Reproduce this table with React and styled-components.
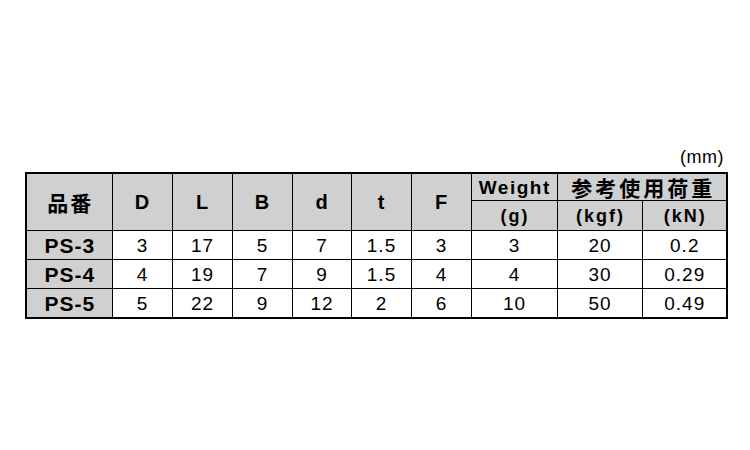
import React from 'react';
import styled, { createGlobalStyle } from 'styled-components';

const GlobalStyle = createGlobalStyle`
  html, body { margin: 0; padding: 0; background: #fff; }
  body { font-family: "Liberation Sans", "Noto Sans CJK JP", sans-serif; color: #000; }
`;

const Page = styled.div`
  width: 750px; height: 450px; box-sizing: border-box;
  padding: 146px 0 0 25px;
  display: flex; flex-direction: column;
`;
const Unit = styled.div`
  width: 701px; text-align: right; font-size: 18px; height: 26px; line-height: 22px;
  padding-right: 2px; box-sizing: border-box; letter-spacing: 0.5px;
`;
const Table = styled.table`
  border-collapse: collapse; table-layout: fixed; width: 701px;
  border: 2px solid #000;
`;
const Th = styled.th`
  background: #d0d0d0; border: 1px solid #000; padding: 0;
  font-weight: bold; text-align: center; white-space: nowrap; line-height: 1;
  font-size: ${({ $size }) => $size || 20}px;
  letter-spacing: ${({ $ls }) => $ls || 0}px;
  height: ${({ $h }) => $h || 26}px;
  font-family: ${({ $jp }) => ($jp ? '"Noto Sans CJK JP", sans-serif' : '"Liberation Sans", sans-serif')};
  padding-left: ${({ $ls }) => $ls || 0}px;
`;
const Name = styled.td`
  background: #d0d0d0; border: 1px solid #000; padding: 0 0 0 1px; line-height: 1;
  font-weight: bold; font-size: 21px; letter-spacing: 1px; text-align: center; height: 28px;
`;
const Td = styled.td`
  border: 1px solid #000; padding: 0 0 0 1px; text-align: center; line-height: 1;
  font-size: 19px; letter-spacing: 1px; height: 28px;
`;

const widths = [86, 60, 60, 60, 59, 60, 60, 86, 85, 85];
const rows = [
  ['PS-3', '3', '17', '5', '7', '1.5', '3', '3', '20', '0.2'],
  ['PS-4', '4', '19', '7', '9', '1.5', '4', '4', '30', '0.29'],
  ['PS-5', '5', '22', '9', '12', '2', '6', '10', '50', '0.49'],
];

export default function App() {
  return (
    <Page>
      <GlobalStyle />
      <Unit>(mm)</Unit>
      <Table>
        <colgroup>
          {widths.map((w, i) => <col key={i} style={{ width: w }} />)}
        </colgroup>
        <thead>
          <tr>
            <Th rowSpan={2} $jp $size={21} $ls={2}>品番</Th>
            <Th rowSpan={2}>D</Th>
            <Th rowSpan={2}>L</Th>
            <Th rowSpan={2}>B</Th>
            <Th rowSpan={2}>d</Th>
            <Th rowSpan={2}>t</Th>
            <Th rowSpan={2}>F</Th>
            <Th $size={19} $ls={1.5} $h={26}>Weight</Th>
            <Th colSpan={2} $jp $size={21} $ls={3} $h={26}>参考使用荷重</Th>
          </tr>
          <tr>
            <Th $size={18} $ls={2} $h={29}>(g)</Th>
            <Th $size={18} $ls={2} $h={29}>(kgf)</Th>
            <Th $size={18} $ls={2} $h={29}>(kN)</Th>
          </tr>
        </thead>
        <tbody>
          {rows.map((r) => (
            <tr key={r[0]}>
              <Name>{r[0]}</Name>
              {r.slice(1).map((v, i) => <Td key={i}>{v}</Td>)}
            </tr>
          ))}
        </tbody>
      </Table>
    </Page>
  );
}
